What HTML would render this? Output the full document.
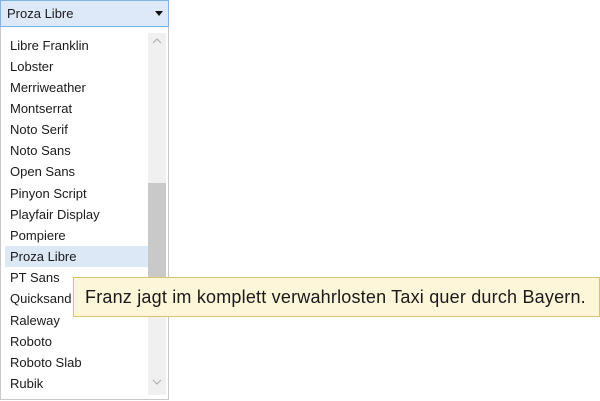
<!DOCTYPE html>
<html><head><style>
body{margin:0;width:600px;height:401px;background:#fff;position:relative;overflow:hidden;font-family:"Liberation Sans",sans-serif;color:#1a1a1a}
.sel{position:absolute;left:0;top:0;width:167px;height:25px;background:#dde9f8;border:1px solid #7fb3e6}
.sel span{position:absolute;left:6px;top:5px;font-size:13px}
.arr{position:absolute;left:154px;top:10px;width:0;height:0;border-left:4px solid transparent;border-right:4px solid transparent;border-top:5px solid #111}
.list{position:absolute;left:0;top:27px;width:167px;height:372px;border:1px solid #c8c8c8;border-top:none;background:#fff}
.it{position:absolute;left:4px;width:143px;height:21px;font-size:13px;line-height:21px;padding-left:5px;box-sizing:border-box}
.hl{background:#dce8f6}
.track{position:absolute;left:147px;top:6px;width:18px;height:362px;background:#f0f0f0}
.thumb{position:absolute;left:147px;top:156px;width:18px;height:118px;background:#c9c9c9}
.tip{position:absolute;left:73px;top:277px;width:525px;height:38px;background:#fdf6d9;border:1px solid #dcc172;font-size:18px;line-height:38px;letter-spacing:0.2px}
.tip span{position:absolute;left:11px;top:0}
svg{position:absolute}
</style></head><body>
<div class="sel"><span>Proza Libre</span><div class="arr"></div></div>
<div class="list">
<div class="track"></div><div class="thumb"></div>
<svg style="left:151px;top:11px" width="10" height="6"><path d="M1 5 L5 1 L9 5" fill="none" stroke="#aaa" stroke-width="1"/></svg>
<svg style="left:151px;top:352px" width="10" height="6"><path d="M1 1 L5 5 L9 1" fill="none" stroke="#aaa" stroke-width="1"/></svg>
<div class="it" style="top:8px">Libre Franklin</div>
<div class="it" style="top:29px">Lobster</div>
<div class="it" style="top:50px">Merriweather</div>
<div class="it" style="top:71px">Montserrat</div>
<div class="it" style="top:92px">Noto Serif</div>
<div class="it" style="top:113px">Noto Sans</div>
<div class="it" style="top:134px">Open Sans</div>
<div class="it" style="top:156px">Pinyon Script</div>
<div class="it" style="top:177px">Playfair Display</div>
<div class="it" style="top:198px">Pompiere</div>
<div class="it hl" style="top:219px">Proza Libre</div>
<div class="it" style="top:240px">PT Sans</div>
<div class="it" style="top:261px">Quicksand</div>
<div class="it" style="top:283px">Raleway</div>
<div class="it" style="top:304px">Roboto</div>
<div class="it" style="top:325px">Roboto Slab</div>
<div class="it" style="top:346px">Rubik</div>
</div>
<div class="tip"><span>Franz jagt im komplett verwahrlosten Taxi quer durch Bayern.</span></div>
</body></html>
